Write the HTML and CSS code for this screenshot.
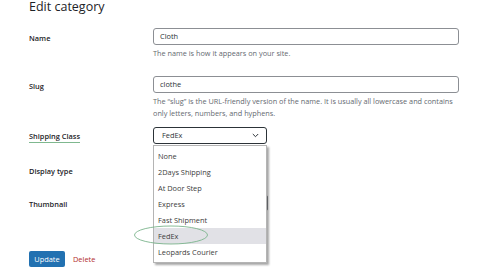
FILE: index.html
```html
<!DOCTYPE html>
<html>
<head>
<meta charset="utf-8">
<link rel="stylesheet" href="styles.css">
</head>
<body>
<div class="page">
  <h1 class="title">Edit category</h1>
  <div class="form">
    <div class="row row-name">
      <div class="label">Name</div>
      <div class="field">
        <div class="input">Cloth</div>
        <p class="desc">The name is how it appears on your site.</p>
      </div>
    </div>
    <div class="row row-slug">
      <div class="label">Slug</div>
      <div class="field">
        <div class="input">clothe</div>
        <p class="desc">The “slug” is the URL-friendly version of the name. It is usually all lowercase and contains only letters, numbers, and hyphens.</p>
      </div>
    </div>
    <div class="row row-ship">
      <div class="label"><span class="mark">Shipping Class</span></div>
      <div class="field">
        <div class="select-wrap">
          <div class="select">
            <span>FedEx</span>
            <svg class="chev" width="7" height="5" viewBox="0 0 7 5"><path d="M0.8 1 L3.5 3.7 L6.2 1" fill="none" stroke="#2c3338" stroke-width="1"/></svg>
          </div>
          <ul class="menu">
            <li>None</li>
            <li>2Days Shipping</li>
            <li>At Door Step</li>
            <li>Express</li>
            <li>Fast Shipment</li>
            <li class="hl">FedEx</li>
            <li>Leopards Courier</li>
          </ul>
          <svg class="ring" width="78" height="22" viewBox="0 0 78 22"><ellipse cx="39" cy="11" rx="36.5" ry="9" fill="none" stroke="#7cb48c" stroke-width="0.9"/></svg>
        </div>
      </div>
    </div>
    <div class="row row-display">
      <div class="label">Display type</div>
      <div class="field"></div>
    </div>
    <div class="row row-thumb">
      <div class="label">Thumbnail</div>
      <div class="field"><div class="thumb-btn"></div></div>
    </div>
    <div class="actions">
      <button class="btn-update">Update</button>
      <span class="delete">Delete</span>
    </div>
  </div>
</div>
</body>
</html>
```

FILE: styles.css
```css
* { box-sizing: border-box; }
html, body { margin: 0; padding: 0; background: #fff; }
body {
  font-family: "Open Sans", "Noto Sans", sans-serif;
  color: #1d2327;
  width: 480px;
  height: 270px;
  overflow: hidden;
}
.page { padding-left: 29px; }
.title {
  margin: 0;
  height: 28px;
  font-size: 12.5px;
  font-weight: 400;
  line-height: 14px;
  color: #1d2327;
}
.form { display: flex; flex-direction: column; }
.row { display: grid; grid-template-columns: 124px 306px; }
.row-name { height: 48px; }
.row-slug { height: 51px; }
.row-ship { height: 34px; }
.row-display { height: 33px; }
.row-thumb { height: 57px; }
.label {
  font-size: 7.4px;
  font-weight: 600;
  line-height: 10px;
  padding-top: 5px;
  color: #1d2327;
}
.row-ship .label { padding-top: 4px; }
.mark { border-bottom: 1.3px solid #7fb88f; padding-bottom: 1px; }
.input {
  height: 17px;
  border: 1px solid #8c8f94;
  border-radius: 3px;
  padding-left: 6px;
  font-size: 7.4px;
  line-height: 15px;
  color: #2c3338;
}
.desc {
  margin: 3px 0 0;
  font-size: 7.3px;
  line-height: 11.6px;
  color: #646970;
}
.select-wrap { position: relative; width: 114px; }
.select {
  height: 17px;
  border: 1px solid #2c3338;
  border-radius: 3px;
  padding: 0 7px 0 8px;
  font-size: 7.4px;
  line-height: 15px;
  color: #2c3338;
  display: flex;
  justify-content: space-between;
  align-items: center;
}
.chev { display: block; }
.menu {
  position: absolute;
  left: 0;
  top: 18px;
  width: 114px;
  margin: 0;
  padding: 2px 0 2px;
  list-style: none;
  background: #fff;
  border: 1px solid #b4b4b4;
  box-shadow: 1.5px 1.5px 2px rgba(0,0,0,0.35);
  z-index: 5;
}
.menu li {
  height: 16px;
  line-height: 16px;
  padding-left: 4px;
  font-size: 7.4px;
  color: #3c3c3c;
}
.menu li.hl { background: #e1e1e6; }
.ring {
  position: absolute;
  left: -21px;
  top: 97px;
  z-index: 6;
}
.thumb-btn {
  width: 115px;
  height: 16px;
  margin-top: 1px;
  border: 1.5px solid #8c8f94;
  border-radius: 2px;
}
.actions { display: flex; align-items: center; gap: 8px; }
.btn-update {
  height: 16px;
  width: 36px;
  padding: 0;
  border: none;
  border-radius: 2px;
  background: #2271b1;
  color: #fff;
  font-family: inherit;
  font-size: 7.4px;
  line-height: 16px;
}
.delete { font-size: 7.4px; color: #b32d2e; }
```
